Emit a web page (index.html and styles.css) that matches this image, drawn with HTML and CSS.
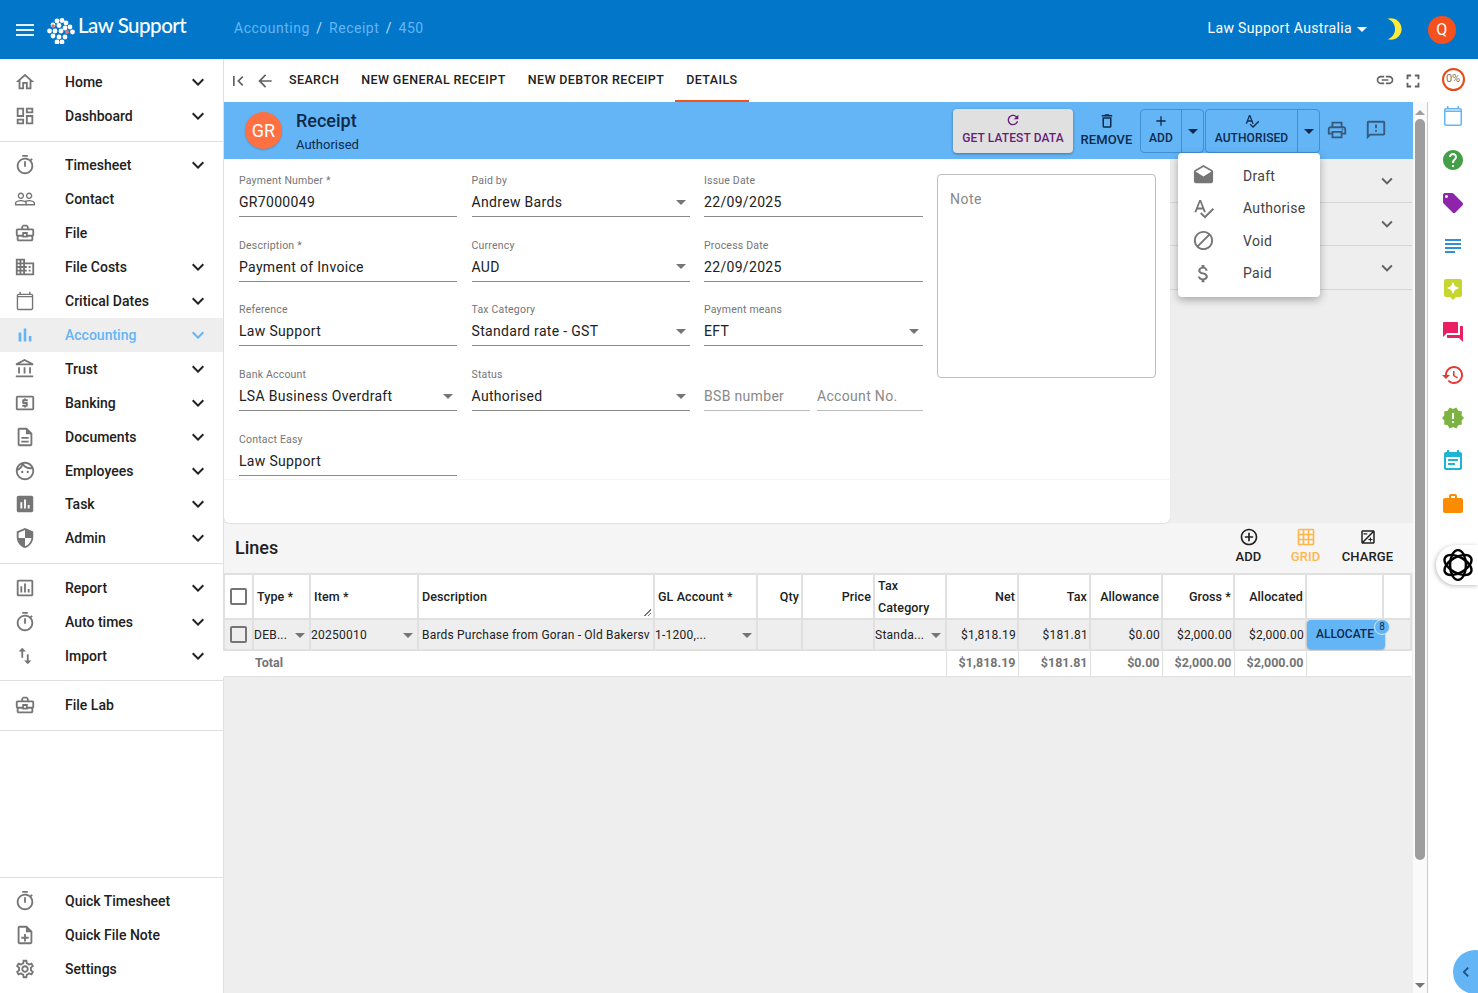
FILE: index.html
```html
<!DOCTYPE html>
<html lang="en">
<head>
<meta charset="utf-8">
<title>Receipt 450</title>
<link rel="stylesheet" href="styles.css">
</head>
<body>
<svg class="sprite" aria-hidden="true">
<defs>
<symbol id="i-menu" viewBox="0 0 24 24"><path d="M3 18h18v-2H3v2zm0-5h18v-2H3v2zm0-7v2h18V6H3z"/></symbol>
<symbol id="i-home" viewBox="0 0 24 24"><path d="M12 5.69l5 4.5V18h-2v-6H9v6H7v-7.81l5-4.5M12 3L2 12h3v8h6v-6h2v6h6v-8h3L12 3z"/></symbol>
<symbol id="i-dash" viewBox="0 0 24 24"><path d="M19 5v2h-4V5h4M9 5v6H5V5h4m10 8v6h-4v-6h4M9 17v2H5v-2h4M21 3h-8v6h8V3zM11 3H3v10h8V3zm10 8h-8v10h8V11zm-10 4H3v6h8v-6z"/></symbol>
<symbol id="i-timer" viewBox="0 0 24 24"><path d="M15 1H9v2h6V1zm-4 13h2V8h-2v6zm8.03-6.61l1.42-1.42c-.43-.51-.9-.99-1.41-1.41l-1.42 1.42C16.07 4.74 14.12 4 12 4c-4.97 0-9 4.03-9 9s4.02 9 9 9 9-4.03 9-9c0-2.12-.74-4.07-1.97-5.61zM12 20c-3.87 0-7-3.13-7-7s3.13-7 7-7 7 3.13 7 7-3.13 7-7 7z"/></symbol>
<symbol id="i-people" viewBox="0 0 24 24"><path d="M16.5 13c-1.2 0-3.07.34-4.5 1-1.43-.67-3.3-1-4.5-1C5.33 13 1 14.08 1 16.25V19h22v-2.75c0-2.17-4.33-3.25-6.5-3.25zm-4 4.5h-10v-1.25c0-.54 2.56-1.75 5-1.75s5 1.21 5 1.75v1.25zm9 0H14v-1.25c0-.46-.2-.86-.52-1.22.88-.3 1.96-.53 3.02-.53 2.44 0 5 1.21 5 1.75v1.25zM7.5 12c1.93 0 3.5-1.57 3.5-3.5S9.43 5 7.5 5 4 6.57 4 8.5 5.57 12 7.5 12zm0-5.5c1.1 0 2 .9 2 2s-.9 2-2 2-2-.9-2-2 .9-2 2-2zm9 5.5c1.93 0 3.5-1.57 3.5-3.5S18.43 5 16.5 5 13 6.57 13 8.5s1.57 3.5 3.5 3.5zm0-5.5c1.1 0 2 .9 2 2s-.9 2-2 2-2-.9-2-2 .9-2 2-2z"/></symbol>
<symbol id="i-case" viewBox="0 0 24 24"><path d="M20 7h-4V5l-2-2h-4L8 5v2H4c-1.1 0-2 .9-2 2v5c0 .75.4 1.38 1 1.73V19c0 1.11.89 2 2 2h14c1.11 0 2-.89 2-2v-3.28c.59-.35 1-.99 1-1.72V9c0-1.1-.9-2-2-2zM10 5h4v2h-4V5zM4 9h16v5h-5v-3H9v3H4V9zm9 6h-2v-2h2v2zm6 4H5v-3h4v1h6v-1h4v3z"/></symbol>
<symbol id="i-domain" viewBox="0 0 24 24"><path d="M12 7V3H2v18h20V7H12zM6 19H4v-2h2v2zm0-4H4v-2h2v2zm0-4H4V9h2v2zm0-4H4V5h2v2zm4 12H8v-2h2v2zm0-4H8v-2h2v2zm0-4H8V9h2v2zm0-4H8V5h2v2zm10 12h-8v-2h2v-2h-2v-2h2v-2h-2V9h8v10zm-2-8h-2v2h2v-2zm0 4h-2v2h2v-2z"/></symbol>
<symbol id="i-cal" viewBox="0 0 24 24"><path d="M19 4h-1V2h-1.5v2h-9V2H6v2H5c-1.1 0-2 .9-2 2v14c0 1.1.9 2 2 2h14c1.1 0 2-.9 2-2V6c0-1.1-.9-2-2-2zm.5 16c0 .3-.2.5-.5.5H5c-.3 0-.5-.2-.5-.5V8h15v12zM4.5 6.5V6c0-.3.2-.5.5-.5h14c.3 0 .5.2.5.5v.5h-15z"/></symbol>
<symbol id="i-bars" viewBox="0 0 24 24"><path d="M5 9.2h3V19H5zM10.6 5h2.8v14h-2.8zm5.6 8H19v6h-2.8z"/></symbol>
<symbol id="i-bank" viewBox="0 0 24 24"><path d="M6.5 10h-2v7h2v-7zm6 0h-2v7h2v-7zm8.5 9H2v2h19v-2zm-2.5-9h-2v7h2v-7zm-7-6.74L16.71 6H6.29l5.21-2.74m0-2.26L2 6v2h19V6l-9.5-5z"/></symbol>
<symbol id="i-atm" viewBox="0 0 24 24"><path d="M11 17h2v-1h1c.55 0 1-.45 1-1v-3c0-.55-.45-1-1-1h-3v-1h4V8h-2V7h-2v1h-1c-.55 0-1 .45-1 1v3c0 .55.45 1 1 1h3v1H9v2h2v1zm9-13H4c-1.11 0-1.99.89-1.99 2L2 18c0 1.11.89 2 2 2h16c1.11 0 2-.89 2-2V6c0-1.11-.89-2-2-2zm0 14H4V6h16v12z"/></symbol>
<symbol id="i-doc" viewBox="0 0 24 24"><path d="M8 16h8v2H8zm0-4h8v2H8zm6-10H6c-1.1 0-2 .9-2 2v16c0 1.1.89 2 1.99 2H18c1.1 0 2-.9 2-2V8l-6-6zm4 18H6V4h7v5h5v11z"/></symbol>
<symbol id="i-face" viewBox="0 0 24 24"><path d="M10.25 13c0 .69-.56 1.25-1.25 1.25S7.75 13.69 7.75 13s.56-1.25 1.25-1.25 1.25.56 1.25 1.25zM15 11.75c-.69 0-1.25.56-1.25 1.25s.56 1.25 1.25 1.25 1.25-.56 1.25-1.25-.56-1.25-1.25-1.25zm7 .25c0 5.52-4.48 10-10 10S2 17.52 2 12 6.48 2 12 2s10 4.48 10 10zM10.66 4.12C12.06 6.44 14.6 8 17.5 8c.46 0 .91-.05 1.34-.12C17.44 5.56 14.9 4 12 4c-.46 0-.91.05-1.34.12zM4.42 9.47c1.71-.97 3.03-2.55 3.66-4.44C6.37 6 5.05 7.58 4.42 9.47zM20 12c0-.78-.12-1.53-.33-2.24-.7.15-1.42.24-2.17.24-3.13 0-5.92-1.44-7.76-3.69C8.69 8.87 6.6 10.88 4 11.86c.01.04 0 .09 0 .14 0 4.41 3.59 8 8 8s8-3.59 8-8z"/></symbol>
<symbol id="i-assess" viewBox="0 0 24 24"><path d="M19 3H5c-1.1 0-2 .9-2 2v14c0 1.1.9 2 2 2h14c1.1 0 2-.9 2-2V5c0-1.1-.9-2-2-2zM9 17H7v-7h2v7zm4 0h-2V7h2v10zm4 0h-2v-4h2v4z"/></symbol>
<symbol id="i-shield" viewBox="0 0 24 24"><path d="M12 1L3 5v6c0 5.55 3.84 10.74 9 12 5.16-1.26 9-6.45 9-12V5l-9-4zm0 10.99h7c-.53 4.12-3.28 7.79-7 8.94V12H5V6.3l7-3.11v8.8z"/></symbol>
<symbol id="i-report" viewBox="0 0 24 24"><path d="M19 3H5c-1.1 0-2 .9-2 2v14c0 1.1.9 2 2 2h14c1.1 0 2-.9 2-2V5c0-1.1-.9-2-2-2zm0 16H5V5h14v14zM7 10h2v7H7zm4-3h2v10h-2zm4 6h2v4h-2z"/></symbol>
<symbol id="i-import" viewBox="0 0 24 24"><path d="M9 3L5 6.99h3V14h2V6.99h3L9 3zm7 14.01V10h-2v7.01h-3L15 21l4-3.99h-3z"/></symbol>
<symbol id="i-note" viewBox="0 0 24 24"><path d="M13 11h-2v3H8v2h3v3h2v-3h3v-2h-3zm1-9H6c-1.1 0-2 .9-2 2v16c0 1.1.89 2 1.99 2H18c1.1 0 2-.9 2-2V8l-6-6zm4 18H6V4h7v5h5v11z"/></symbol>
<symbol id="i-gear" viewBox="0 0 24 24"><path d="M19.43 12.98c.04-.32.07-.64.07-.98 0-.34-.03-.66-.07-.98l2.11-1.65c.19-.15.24-.42.12-.64l-2-3.46c-.12-.22-.39-.3-.61-.22l-2.49 1c-.52-.4-1.08-.73-1.69-.98l-.38-2.65C14.46 2.18 14.25 2 14 2h-4c-.25 0-.46.18-.49.42l-.38 2.65c-.61.25-1.17.59-1.69.98l-2.49-1c-.23-.09-.49 0-.61.22l-2 3.46c-.13.22-.07.49.12.64l2.11 1.65c-.04.32-.07.65-.07.98 0 .33.03.66.07.98l-2.11 1.65c-.19.15-.24.42-.12.64l2 3.46c.12.22.39.3.61.22l2.49-1c.52.4 1.08.73 1.69.98l.38 2.65c.03.24.24.42.49.42h4c.25 0 .46-.18.49-.42l.38-2.65c.61-.25 1.17-.59 1.69-.98l2.49 1c.23.09.49 0 .61-.22l2-3.46c.12-.22.07-.49-.12-.64l-2.11-1.65zM17.45 11.27c.04.31.05.52.05.73 0 .21-.02.43-.05.73l-.14 1.13.89.7 1.08.84-.7 1.21-1.27-.51-1.04-.42-.9.68c-.43.32-.84.56-1.25.73l-1.06.43-.16 1.13-.2 1.35h-1.4l-.19-1.35-.16-1.13-1.06-.43c-.43-.18-.83-.41-1.23-.71l-.91-.7-1.06.43-1.27.51-.7-1.21 1.08-.84.89-.7-.14-1.13c-.03-.31-.05-.54-.05-.74s.02-.43.05-.73l.14-1.13-.89-.7-1.08-.84.7-1.21 1.27.51 1.04.42.9-.68c.43-.32.84-.56 1.25-.73l1.06-.43.16-1.13.2-1.35h1.39l.19 1.35.16 1.13 1.06.43c.43.18.83.41 1.23.71l.91.7 1.06-.43 1.27-.51.7 1.21-1.07.85-.89.7.14 1.13zM12 8c-2.21 0-4 1.79-4 4s1.79 4 4 4 4-1.79 4-4-1.79-4-4-4zm0 6c-1.1 0-2-.9-2-2s.9-2 2-2 2 .9 2 2-.9 2-2 2z"/></symbol>
<symbol id="i-more" viewBox="0 0 24 24"><path d="M16.59 8.59L12 13.17 7.41 8.59 6 10l6 6 6-6z"/></symbol>
<symbol id="i-first" viewBox="0 0 24 24"><path d="M18.41 16.59L13.82 12l4.59-4.59L17 6l-6 6 6 6zM6 6h2v12H6z"/></symbol>
<symbol id="i-back" viewBox="0 0 24 24"><path d="M20 11H7.83l5.59-5.59L12 4l-8 8 8 8 1.41-1.41L7.83 13H20v-2z"/></symbol>
<symbol id="i-link" viewBox="0 0 24 24"><path d="M3.9 12c0-1.71 1.39-3.1 3.1-3.1h4V7H7c-2.76 0-5 2.24-5 5s2.24 5 5 5h4v-1.9H7c-1.71 0-3.1-1.39-3.1-3.1zM8 13h8v-2H8v2zm9-6h-4v1.9h4c1.71 0 3.1 1.39 3.1 3.1s-1.39 3.1-3.1 3.1h-4V17h4c2.76 0 5-2.24 5-5s-2.24-5-5-5z"/></symbol>
<symbol id="i-full" viewBox="0 0 24 24"><path d="M7 14H5v5h5v-2H7v-3zm-2-4h2V7h3V5H5v5zm12 7h-3v2h5v-5h-2v3zM14 5v2h3v3h2V5h-5z"/></symbol>
<symbol id="i-refresh" viewBox="0 0 24 24"><path d="M17.65 6.35C16.2 4.9 14.21 4 12 4c-4.42 0-7.99 3.58-7.99 8s3.57 8 7.99 8c3.73 0 6.84-2.55 7.73-6h-2.08c-.82 2.33-3.04 4-5.65 4-3.31 0-6-2.69-6-6s2.69-6 6-6c1.66 0 3.14.69 4.22 1.78L13 11h7V4l-2.35 2.35z"/></symbol>
<symbol id="i-trash" viewBox="0 0 24 24"><path d="M6 19c0 1.1.9 2 2 2h8c1.1 0 2-.9 2-2V7H6v12zM8 9h8v10H8V9zm7.5-5l-1-1h-5l-1 1H5v2h14V4z"/></symbol>
<symbol id="i-add" viewBox="0 0 24 24"><path d="M19 13h-6v6h-2v-6H5v-2h6V5h2v6h6v2z"/></symbol>
<symbol id="i-spell" viewBox="0 0 24 24"><path d="M12.45 16h2.09L9.43 3H7.57L2.46 16h2.09l1.12-3h5.64l1.14 3zm-6.02-5L8.5 5.48 10.57 11H6.43zm15.16.59l-8.09 8.09L9.83 16l-1.41 1.41 5.09 5.09L23 13l-1.41-1.41z"/></symbol>
<symbol id="i-print" viewBox="0 0 24 24"><path d="M19 8h-1V3H6v5H5c-1.66 0-3 1.34-3 3v6h4v4h12v-4h4v-6c0-1.66-1.34-3-3-3zM8 5h8v3H8V5zm8 12v2H8v-4h8v2zm2-2v-2H6v2H4v-4c0-.55.45-1 1-1h14c.55 0 1 .45 1 1v4h-2z"/><circle cx="18" cy="11.5" r="1"/></symbol>
<symbol id="i-sms" viewBox="0 0 24 24"><path d="M20 2H4c-1.1 0-1.99.9-1.99 2L2 22l4-4h14c1.1 0 2-.9 2-2V4c0-1.1-.9-2-2-2zm0 14H5.17L4 17.17V4h16v12zm-9-4h2v2h-2zm0-6h2v4h-2z"/></symbol>
<symbol id="i-draft" viewBox="0 0 24 24"><path d="M21.99 8c0-.72-.37-1.35-.94-1.7L12 1 2.95 6.3C2.38 6.65 2 7.28 2 8v10c0 1.1.9 2 2 2h16c1.1 0 2-.9 2-2l-.01-10zM12 13L3.74 7.84 12 3l8.26 4.84L12 13z"/></symbol>
<symbol id="i-block" viewBox="0 0 24 24"><path d="M12 2C6.48 2 2 6.48 2 12s4.48 10 10 10 10-4.48 10-10S17.52 2 12 2zM4 12c0-4.42 3.58-8 8-8 1.85 0 3.55.63 4.9 1.69L5.69 16.9C4.63 15.55 4 13.85 4 12zm8 8c-1.85 0-3.55-.63-4.9-1.69L18.31 7.1C19.37 8.45 20 10.15 20 12c0 4.42-3.58 8-8 8z"/></symbol>
<symbol id="i-money" viewBox="0 0 24 24"><path d="M11.8 10.9c-2.27-.59-3-1.2-3-2.15 0-1.09 1.01-1.85 2.7-1.85 1.78 0 2.44.85 2.5 2.1h2.21c-.07-1.72-1.12-3.3-3.21-3.81V3h-3v2.16c-1.94.42-3.5 1.68-3.5 3.61 0 2.31 1.91 3.46 4.7 4.13 2.5.6 3 1.48 3 2.41 0 .69-.49 1.79-2.7 1.79-2.06 0-2.87-.92-2.98-2.1h-2.2c.12 2.19 1.76 3.42 3.68 3.83V21h3v-2.15c1.95-.37 3.5-1.5 3.5-3.55 0-2.84-2.43-3.81-4.7-4.4z"/></symbol>
<symbol id="i-help" viewBox="0 0 24 24"><path d="M12 2C6.48 2 2 6.48 2 12s4.48 10 10 10 10-4.48 10-10S17.52 2 12 2zm1 17h-2v-2h2v2zm2.07-7.75l-.9.92C13.45 12.9 13 13.5 13 15h-2v-.5c0-1.1.45-2.1 1.17-2.83l1.24-1.26c.37-.36.59-.86.59-1.41 0-1.1-.9-2-2-2s-2 .9-2 2H8c0-2.21 1.79-4 4-4s4 1.79 4 4c0 .88-.36 1.68-.93 2.25z"/></symbol>
<symbol id="i-tag" viewBox="0 0 24 24"><path d="M21.41 11.58l-9-9C12.05 2.22 11.55 2 11 2H4c-1.1 0-2 .9-2 2v7c0 .55.22 1.05.59 1.42l9 9c.36.36.86.58 1.41.58.55 0 1.05-.22 1.41-.59l7-7c.37-.36.59-.86.59-1.41 0-.55-.23-1.06-.59-1.42zM5.5 7C4.67 7 4 6.33 4 5.5S4.67 4 5.5 4 7 4.67 7 5.5 6.33 7 5.5 7z"/></symbol>
<symbol id="i-notes" viewBox="0 0 24 24"><path d="M14 17H4v2h10v-2zm6-8H4v2h16V9zM4 15h16v-2H4v2zM4 5v2h16V5H4z"/></symbol>
<symbol id="i-assist" viewBox="0 0 24 24"><path d="M19 2H5c-1.1 0-2 .9-2 2v14c0 1.1.9 2 2 2h4l3 3 3-3h4c1.1 0 2-.9 2-2V4c0-1.1-.9-2-2-2zm-5.12 10.88L12 17l-1.88-4.12L6 11l4.12-1.88L12 5l1.88 4.12L18 11l-4.12 1.88z"/></symbol>
<symbol id="i-forum" viewBox="0 0 24 24"><path d="M21 6h-2v9H6v2c0 .55.45 1 1 1h11l4 4V7c0-.55-.45-1-1-1zm-4 6V3c0-.55-.45-1-1-1H3c-.55 0-1 .45-1 1v14l4-4h10c.55 0 1-.45 1-1z"/></symbol>
<symbol id="i-history" viewBox="0 0 24 24"><path d="M13 3c-4.97 0-9 4.03-9 9H1l3.89 3.89.07.14L9 12H6c0-3.87 3.13-7 7-7s7 3.13 7 7-3.13 7-7 7c-1.93 0-3.68-.79-4.94-2.06l-1.42 1.42C8.27 19.99 10.51 21 13 21c4.97 0 9-4.03 9-9s-4.03-9-9-9zm-1 5v5l4.28 2.54.72-1.21-3.5-2.08V8H12z"/></symbol>
<symbol id="i-release" viewBox="0 0 24 24"><path d="M23 12l-2.44-2.78.34-3.68-3.61-.82-1.89-3.18L12 3 8.6 1.54 6.71 4.72l-3.61.81.34 3.68L1 12l2.44 2.78-.34 3.69 3.61.82 1.89 3.18L12 21l3.4 1.46 1.89-3.18 3.61-.82-.34-3.68L23 12zm-10 5h-2v-2h2v2zm0-4h-2V7h2v6z"/></symbol>
<symbol id="i-event" viewBox="0 0 24 24"><path d="M17 10H7v2h10v-2zm2-7h-1V1h-2v2H8V1H6v2H5c-1.11 0-1.99.9-1.99 2L3 19c0 1.1.89 2 2 2h14c1.1 0 2-.9 2-2V5c0-1.1-.9-2-2-2zm0 16H5V8h14v11zm-5-5H7v2h7v-2z"/></symbol>
<symbol id="i-work" viewBox="0 0 24 24"><path d="M20 6h-4V4c0-1.11-.89-2-2-2h-4c-1.11 0-2 .89-2 2v2H4c-1.11 0-1.99.89-1.99 2L2 19c0 1.11.89 2 2 2h16c1.11 0 2-.89 2-2V8c0-1.11-.89-2-2-2zm-6 0h-4V4h4v2z"/></symbol>
<symbol id="i-addc" viewBox="0 0 24 24"><path d="M13 7h-2v4H7v2h4v4h2v-4h4v-2h-4V7zm-1-5C6.48 2 2 6.48 2 12s4.48 10 10 10 10-4.48 10-10S17.52 2 12 2zm0 18c-4.41 0-8-3.59-8-8s3.59-8 8-8 8 3.59 8 8-3.59 8-8 8z"/></symbol>
<symbol id="i-grid" viewBox="0 0 24 24"><path d="M20 2H4c-1.1 0-2 .9-2 2v16c0 1.1.9 2 2 2h16c1.1 0 2-.9 2-2V4c0-1.1-.9-2-2-2zM8 20H4v-4h4v4zm0-6H4v-4h4v4zm0-6H4V4h4v4zm6 12h-4v-4h4v4zm0-6h-4v-4h4v4zm0-6h-4V4h4v4zm6 12h-4v-4h4v4zm0-6h-4v-4h4v4zm0-6h-4V4h4v4z"/></symbol>
<symbol id="i-expo" viewBox="0 0 24 24"><path fill-rule="evenodd" d="M19 3H5c-1.1 0-2 .9-2 2v14c0 1.1.9 2 2 2h14c1.1 0 2-.9 2-2V5c0-1.1-.9-2-2-2zM5 5h12.59L5 17.59V5zm14 14H6.41L19 6.41V19zM14.5 18H16v-2h2v-1.5h-2v-2h-1.5v2h-2V16h2v2zM6 7h5v1.5H6V7z"/></symbol>
<symbol id="i-moon" viewBox="0 0 24 24"><path d="M9 2c-1.05 0-2.05.16-3 .46 4.06 1.27 7 5.06 7 9.54 0 4.48-2.94 8.27-7 9.54.95.3 1.95.46 3 .46 5.52 0 10-4.48 10-10S14.52 2 9 2z"/></symbol>
<symbol id="i-left" viewBox="0 0 24 24"><path d="M15.41 7.41L14 6l-6 6 6 6 1.41-1.41L10.83 12z"/></symbol>
</defs>
</svg>

<div class="app">
  <header class="topbar">
    <svg class="ic menu-ic"><use href="#i-menu"/></svg>
    <div class="logo">
      <svg class="logo-mark" viewBox="0 0 28 26">
        <g fill="#fff"><circle cx="10" cy="3" r="2.4"/><circle cx="15" cy="2.5" r="2.4"/><circle cx="19" cy="5" r="2.4"/><circle cx="6" cy="7" r="2.4"/><circle cx="12" cy="7.5" r="2.4"/><circle cx="18" cy="10" r="2.4"/><circle cx="23" cy="9" r="2.4"/><circle cx="2.5" cy="13" r="2.4"/><circle cx="8" cy="13" r="2.4"/><circle cx="14" cy="13" r="2.4"/><circle cx="25.5" cy="14" r="2.4"/><circle cx="6" cy="18" r="2.4"/><circle cx="12" cy="19" r="2.4"/><circle cx="18" cy="19" r="2.4"/><circle cx="10" cy="24" r="2.4"/><circle cx="15" cy="24" r="2.4"/></g>
        <g fill="#e57373"><circle cx="6" cy="8" r="1.8"/><circle cx="20" cy="14" r="2"/></g>
      </svg>
      <span class="logo-text">Law Support</span>
    </div>
    <nav class="crumbs"><span>Accounting</span><i>/</i><span>Receipt</span><i>/</i><span>450</span></nav>
    <div class="top-right">
      <span class="org">Law Support Australia</span><b class="caret caret-w"></b>
      <svg class="ic moon"><use href="#i-moon"/></svg>
      <span class="avatar-q">Q</span>
    </div>
  </header>

  <aside class="sidebar">
    <div class="nav-top">
      <ul class="nav">
        <li class="nav-row"><svg class="ic"><use href="#i-home"/></svg><span>Home</span><svg class="ic chev"><use href="#i-more"/></svg></li>
        <li class="nav-row"><svg class="ic"><use href="#i-dash"/></svg><span>Dashboard</span><svg class="ic chev"><use href="#i-more"/></svg></li>
      </ul>
      <ul class="nav">
        <li class="nav-row"><svg class="ic"><use href="#i-timer"/></svg><span>Timesheet</span><svg class="ic chev"><use href="#i-more"/></svg></li>
        <li class="nav-row"><svg class="ic"><use href="#i-people"/></svg><span>Contact</span></li>
        <li class="nav-row"><svg class="ic"><use href="#i-case"/></svg><span>File</span></li>
        <li class="nav-row"><svg class="ic"><use href="#i-domain"/></svg><span>File Costs</span><svg class="ic chev"><use href="#i-more"/></svg></li>
        <li class="nav-row"><svg class="ic"><use href="#i-cal"/></svg><span>Critical Dates</span><svg class="ic chev"><use href="#i-more"/></svg></li>
        <li class="nav-row active"><svg class="ic"><use href="#i-bars"/></svg><span>Accounting</span><svg class="ic chev"><use href="#i-more"/></svg></li>
        <li class="nav-row"><svg class="ic"><use href="#i-bank"/></svg><span>Trust</span><svg class="ic chev"><use href="#i-more"/></svg></li>
        <li class="nav-row"><svg class="ic"><use href="#i-atm"/></svg><span>Banking</span><svg class="ic chev"><use href="#i-more"/></svg></li>
        <li class="nav-row"><svg class="ic"><use href="#i-doc"/></svg><span>Documents</span><svg class="ic chev"><use href="#i-more"/></svg></li>
        <li class="nav-row nav-row-short"><svg class="ic"><use href="#i-face"/></svg><span>Employees</span><svg class="ic chev"><use href="#i-more"/></svg></li>
        <li class="nav-row"><svg class="ic"><use href="#i-assess"/></svg><span>Task</span><svg class="ic chev"><use href="#i-more"/></svg></li>
        <li class="nav-row"><svg class="ic"><use href="#i-shield"/></svg><span>Admin</span><svg class="ic chev"><use href="#i-more"/></svg></li>
      </ul>
      <ul class="nav">
        <li class="nav-row"><svg class="ic"><use href="#i-report"/></svg><span>Report</span><svg class="ic chev"><use href="#i-more"/></svg></li>
        <li class="nav-row"><svg class="ic"><use href="#i-timer"/></svg><span>Auto times</span><svg class="ic chev"><use href="#i-more"/></svg></li>
        <li class="nav-row"><svg class="ic"><use href="#i-import"/></svg><span>Import</span><svg class="ic chev"><use href="#i-more"/></svg></li>
      </ul>
      <ul class="nav">
        <li class="nav-row"><svg class="ic"><use href="#i-case"/></svg><span>File Lab</span></li>
      </ul>
    </div>
    <ul class="nav nav-bottom">
      <li class="nav-row"><svg class="ic"><use href="#i-timer"/></svg><span>Quick Timesheet</span></li>
      <li class="nav-row"><svg class="ic"><use href="#i-note"/></svg><span>Quick File Note</span></li>
      <li class="nav-row"><svg class="ic"><use href="#i-gear"/></svg><span>Settings</span></li>
    </ul>
  </aside>

  <main class="main">
    <div class="tabs">
      <svg class="ic tab-ic first-ic"><use href="#i-first"/></svg>
      <svg class="ic tab-ic"><use href="#i-back"/></svg>
      <a class="tab">SEARCH</a>
      <a class="tab">NEW GENERAL RECEIPT</a>
      <a class="tab">NEW DEBTOR RECEIPT</a>
      <a class="tab tab-on">DETAILS</a>
      <span class="tabs-end">
        <svg class="ic tab-ic"><use href="#i-link"/></svg>
        <svg class="ic tab-ic full-ic"><use href="#i-full"/></svg>
      </span>
    </div>
    <div class="stage">
      <div class="content">
        <section class="appbar">
          <span class="avatar-gr">GR</span>
          <div class="appbar-title"><h1>Receipt</h1><p>Authorised</p></div>
          <div class="actions">
            <button class="act act-latest"><svg class="ic"><use href="#i-refresh"/></svg>GET LATEST DATA</button>
            <button class="act act-remove"><svg class="ic"><use href="#i-trash"/></svg>REMOVE</button>
            <div class="split">
              <button class="act act-add"><svg class="ic"><use href="#i-add"/></svg>ADD</button>
              <button class="drop"><b class="caret"></b></button>
            </div>
            <div class="split">
              <button class="act act-auth"><svg class="ic"><use href="#i-spell"/></svg>AUTHORISED</button>
              <button class="drop"><b class="caret"></b></button>
            </div>
            <svg class="ic bar-ic"><use href="#i-print"/></svg>
            <svg class="ic bar-ic"><use href="#i-sms"/></svg>
          </div>
        </section>

        <section class="detail">
          <form class="card">
            <div class="fields">
              <div class="field"><label>Payment Number *</label><div class="val">GR7000049</div></div>
              <div class="field"><label>Paid by</label><div class="val sel">Andrew Bards<b class="caret"></b></div></div>
              <div class="field"><label>Issue Date</label><div class="val">22/09/2025</div></div>
              <div class="field"><label>Description *</label><div class="val">Payment of Invoice</div></div>
              <div class="field"><label>Currency</label><div class="val sel">AUD<b class="caret"></b></div></div>
              <div class="field"><label>Process Date</label><div class="val">22/09/2025</div></div>
              <div class="field"><label>Reference</label><div class="val">Law Support</div></div>
              <div class="field"><label>Tax Category</label><div class="val sel">Standard rate - GST<b class="caret"></b></div></div>
              <div class="field"><label>Payment means</label><div class="val sel">EFT<b class="caret"></b></div></div>
              <div class="field"><label>Bank Account</label><div class="val sel">LSA Business Overdraft<b class="caret"></b></div></div>
              <div class="field"><label>Status</label><div class="val sel">Authorised<b class="caret"></b></div></div>
              <div class="field field-pair">
                <div class="sub"><label>&nbsp;</label><div class="val ph">BSB number</div></div>
                <div class="sub"><label>&nbsp;</label><div class="val ph">Account No.</div></div>
              </div>
              <div class="field"><label>Contact Easy</label><div class="val">Law Support</div></div>
            </div>
            <div class="notebox">Note</div>
          </form>
          <div class="panels">
            <div class="panel"><svg class="ic"><use href="#i-more"/></svg></div>
            <div class="panel"><svg class="ic"><use href="#i-more"/></svg></div>
            <div class="panel"><svg class="ic"><use href="#i-more"/></svg></div>
          </div>
        </section>

        <section class="lines">
          <div class="lines-head">
            <h2>Lines</h2>
            <div class="lines-acts">
              <button class="lact lact-add"><svg class="ic"><use href="#i-addc"/></svg>ADD</button>
              <button class="lact lact-grid"><svg class="ic"><use href="#i-grid"/></svg>GRID</button>
              <button class="lact lact-charge"><svg class="ic"><use href="#i-expo"/></svg>CHARGE</button>
            </div>
          </div>
          <table class="grid">
            <colgroup>
              <col class="c29"><col class="c57"><col class="c108"><col class="c236"><col class="c103"><col class="c45">
              <col class="c72"><col class="c72"><col class="c72"><col class="c72"><col class="c72"><col class="c72"><col class="c72"><col class="c77"><col class="c28">
            </colgroup>
            <thead>
              <tr>
                <th class="ctr"><span class="check"></span></th>
                <th>Type *</th><th>Item *</th><th class="desc-h">Description<span class="grip"></span></th><th>GL Account *</th>
                <th class="num">Qty</th><th class="num">Price</th><th>Tax Category</th>
                <th class="num">Net</th><th class="num">Tax</th><th class="num">Allowance</th><th class="num">Gross *</th><th class="num">Allocated</th><th></th><th></th>
              </tr>
            </thead>
            <tbody>
              <tr>
                <td class="ctr"><span class="check"></span></td>
                <td class="tsel">DEB...<b class="caret"></b></td>
                <td class="tsel">20250010<b class="caret"></b></td>
                <td class="desc">Bards Purchase from Goran - Old Bakersv</td>
                <td class="tsel">1-1200,...<b class="caret"></b></td>
                <td></td><td></td>
                <td class="tsel">Standa...<b class="caret"></b></td>
                <td class="num">$1,818.19</td><td class="num">$181.81</td><td class="num">$0.00</td><td class="num">$2,000.00</td><td class="num">$2,000.00</td>
                <td class="alloc"><button class="allocate">ALLOCATE<span class="badge">8</span></button></td>
                <td></td>
              </tr>
            </tbody>
            <tfoot>
              <tr>
                <td class="foot-blank"></td><td class="foot-blank tot-label" colspan="7">Total</td>
                <td class="num">$1,818.19</td><td class="num">$181.81</td><td class="num">$0.00</td><td class="num">$2,000.00</td><td class="num">$2,000.00</td><td class="foot-blank"></td><td class="foot-blank"></td>
              </tr>
            </tfoot>
          </table>
        </section>

        <div class="menu">
          <div class="menu-item"><svg class="ic"><use href="#i-draft"/></svg>Draft</div>
          <div class="menu-item"><svg class="ic"><use href="#i-spell"/></svg>Authorise</div>
          <div class="menu-item"><svg class="ic"><use href="#i-block"/></svg>Void</div>
          <div class="menu-item"><svg class="ic"><use href="#i-money"/></svg>Paid</div>
        </div>
      </div>
      <div class="vscroll"><b class="arr-up"></b><span class="thumb"></span><b class="arr-down"></b></div>
    </div>
  </main>

  <aside class="rail">
    <span class="pct">0%</span>
    <svg class="ic c-blue"><use href="#i-cal"/></svg>
    <svg class="ic c-green"><use href="#i-help"/></svg>
    <svg class="ic c-purple"><use href="#i-tag"/></svg>
    <svg class="ic c-lines"><use href="#i-notes"/></svg>
    <svg class="ic c-lime"><use href="#i-assist"/></svg>
    <svg class="ic c-pink"><use href="#i-forum"/></svg>
    <svg class="ic c-red"><use href="#i-history"/></svg>
    <svg class="ic c-lgreen"><use href="#i-release"/></svg>
    <svg class="ic c-cyan"><use href="#i-event"/></svg>
    <svg class="ic c-orange"><use href="#i-work"/></svg>
    <div class="knot">
      <svg viewBox="0 0 32 32"><g fill="none" stroke="#000" stroke-width="2.3"><ellipse cx="16" cy="16" rx="7.5" ry="14"/><ellipse cx="16" cy="16" rx="7.5" ry="14" transform="rotate(60 16 16)"/><ellipse cx="16" cy="16" rx="7.5" ry="14" transform="rotate(120 16 16)"/></g></svg>
    </div>
    <div class="rail-toggle"><svg class="ic"><use href="#i-left"/></svg></div>
  </aside>
</div>
</body>
</html>
```
FILE: styles.css
```css
* { box-sizing: border-box; }
html, body { margin: 0; height: 100%; overflow: hidden; }
body { font-family: Roboto, "Liberation Sans", sans-serif; color: #212121; background: #fff; }
ul { list-style: none; margin: 0; padding: 0; }
h1, h2, p { margin: 0; }
button { font: inherit; border: 0; background: none; padding: 0; color: inherit; }
.sprite { position: absolute; width: 0; height: 0; }
.ic { width: 24px; height: 24px; fill: currentColor; display: block; flex: none; }

.app { display: grid; grid-template-columns: 224px 1fr 50px; grid-template-rows: 59px 934px; height: 993px; width: 1478px; }

/* top bar */
.topbar { grid-column: 1 / 4; background: #0277c9; display: flex; align-items: center; color: #fff; padding: 0 22px 0 13px; }
.menu-ic { color: #e3f2fd; }
.logo { display: flex; align-items: center; margin: -5px 0 0 10px; width: 187px; }
.logo-mark { width: 28px; height: 26px; margin-top: 7px; }
.logo-text { font-family: Lato, sans-serif; font-size: 20.5px; font-weight: 500; letter-spacing: -.5px; margin-left: 3px; padding-bottom: 4px; }
.crumbs { display: flex; color: #64b5f6; font-size: 14px; letter-spacing: .5px; gap: 6.5px; padding-bottom: 3px; }
.crumbs i { font-style: normal; color: #bbdefb; }
.top-right { margin-left: auto; display: flex; align-items: center; font-size: 14px; letter-spacing: .35px; }
.org { padding-bottom: 3px; }
.caret { display: inline-block; width: 0; height: 0; border: 5px solid transparent; border-top-color: #757575; border-bottom: 0; flex: none; }
.caret-w { border-top-color: #fff; margin-left: 5px; }
.moon { color: #ffeb3b; width: 26px; height: 26px; margin-left: 14px; margin-top: -1px; }
.avatar-q { width: 28px; height: 28px; border-radius: 50%; background: #f4511e; margin-left: 21px; display: flex; align-items: center; justify-content: center; font-size: 16px; }

/* sidebar */
.sidebar { border-right: 1px solid #e0e0e0; display: flex; flex-direction: column; justify-content: space-between; padding-top: 6px; }
.nav { padding-bottom: 8px; border-bottom: 1px solid #e0e0e0; margin-bottom: 7px; }
.nav-top .nav:nth-child(1) { margin-bottom: 6px; }
.nav-top .nav:nth-child(3) { padding-bottom: 7px; }
.nav-row { height: 34px; display: flex; align-items: center; padding-left: 14px; font-size: 14px; font-weight: 500; color: #212121; position: relative; }
.nav-row-short { height: 33px; }
.nav-row > .ic { color: #757575; width: 22px; height: 22px; }
.nav-row span { margin-left: 29px; }
.nav-row > .chev { margin-left: auto; margin-right: 13px; width: 24px; height: 24px; color: #212121; }
.nav-row.active { background: #eee; color: #64b5f6; }
.nav-row.active > .ic { color: #64b5f6; }
.nav-bottom { border-bottom: 0; border-top: 1px solid #e0e0e0; margin: 0; padding: 6px 0 7px; }

/* tabs */
.main { min-width: 0; display: flex; flex-direction: column; }
.tabs { height: 43px; display: flex; align-items: center; padding-left: 4px; flex: none; }
.tab-ic { color: #616161; width: 20px; height: 20px; }
.first-ic { margin-right: 7px; }
.tab { font-size: 12.5px; font-weight: 500; padding: 0 11px; height: 43px; line-height: 42px; letter-spacing: .4px; color: #212121; }
.tabs > .tab:first-of-type { margin-left: 3px; }
.tab-on { border-bottom: 2px solid #f4511e; }
.tabs-end { margin-left: auto; display: flex; margin-right: 4px; gap: 7px; }
.full-ic { width: 22px; height: 22px; }

.stage { flex: 1; display: flex; min-height: 0; border-right: 1px solid #ccc; }
.content { flex: 1; position: relative; background: #eee; min-width: 0; display: flex; flex-direction: column; }
.vscroll { width: 14px; background: #fafafa; flex: none; display: flex; flex-direction: column; align-items: center; padding: 8px 0 5px; }
.thumb { width: 10px; height: 741px; background: #9e9e9e; border-radius: 5px; margin-top: 4px; }
.arr-up { width: 0; height: 0; border: 5px solid transparent; border-bottom: 5px solid #9e9e9e; border-top: 0; }
.arr-down { width: 0; height: 0; border: 5px solid transparent; border-top: 5px solid #757575; border-bottom: 0; margin-top: auto; }

/* app bar */
.appbar { height: 57px; background: #64b5f6; display: flex; align-items: center; padding-left: 21px; flex: none; color: #0d2a4a; }
.avatar-gr { width: 37px; height: 37px; border-radius: 50%; background: #ff7043; color: #fff; font-size: 18px; display: flex; align-items: center; justify-content: center; box-shadow: 0 1px 2px rgba(0,0,0,.2); }
.appbar-title { margin-left: 14px; }
.appbar-title h1 { font-size: 18px; font-weight: 500; line-height: 24px; margin-top: 3px; }
.appbar-title p { font-size: 13px; line-height: 22px; margin-top: 1px; }
.actions { margin-left: auto; display: flex; align-items: flex-start; height: 57px; padding-top: 7px; }
.act { display: flex; flex-direction: column; align-items: center; font-size: 12px; font-weight: 500; letter-spacing: .1px; height: 44px; }
.act .ic { width: 16px; height: 16px; margin: 3px 0 2px; }
.act-latest { width: 120px; background: #e0e0e0; color: #6a1b7a; border-radius: 4px; box-shadow: 0 1px 3px rgba(0,0,0,.35); }
.act-latest .ic { margin-bottom: 3px; }
.act-remove { width: 67px; font-size: 13px; }
.act-remove .ic { width: 18px; height: 18px; margin: 3px 0 2px; }
.act-add { width: 40px; }
.act-auth { width: 91px; }
.split { display: flex; border: 1px solid #3f8fd6; border-radius: 4px; height: 44px; margin-right: 1px; }
.split .act { height: 42px; }
.drop { width: 22px; border-left: 1px solid #3f8fd6; display: flex; align-items: center; justify-content: center; }
.drop .caret { border-top-color: #0d2a4a; }
.bar-ic { width: 22px; height: 22px; color: #37597a; margin: 10px 0 0 5px; }
.bar-ic + .bar-ic { margin-left: 17px; margin-right: 26px; }

/* form */
.detail { display: flex; height: 364px; flex: none; }
.card { width: 946px; background: #fff; border-radius: 0 0 6px 6px; display: flex; align-items: flex-start; padding: 15px 14px 0 15px; position: relative; box-shadow: 0 1px 1px rgba(0,0,0,.08); }
.card::after { content: ""; position: absolute; left: 0; right: 0; top: 320px; border-top: 1px solid #f5f5f5; }
.fields { display: grid; grid-template-columns: 218px 218px 219px; column-gap: 14.5px; grid-auto-rows: 64.7px; width: 684px; flex: none; }
.field { display: flex; flex-direction: column; min-width: 0; }
label { display: block; font-size: 10.5px; line-height: 13px; color: #757575; letter-spacing: .2px; height: 13px; }
.val { margin-top: 1px; height: 29px; line-height: 28px; border-bottom: 1px solid #8a8a8a; font-size: 14px; letter-spacing: .32px; color: #212121; display: flex; align-items: center; justify-content: space-between; }
.sel { padding-right: 4px; }
.field-pair { flex-direction: row; gap: 7px; }
.sub { flex: 1; min-width: 0; }
.ph { color: #888; border-bottom-color: #bbb; }
.notebox { width: 219px; height: 204px; margin-left: 14px; border: 1px solid #bdbdbd; border-radius: 4px; padding: 16px 12px; font-size: 14px; letter-spacing: .5px; color: #888; flex: none; }
.panels { flex: 1; padding-right: 1px; }
.panel { height: 43.5px; border-bottom: 1px solid #d6d6d6; display: flex; align-items: center; justify-content: flex-end; padding: 1px 14px 0 0; color: #616161; }
.panel .ic { width: 22px; height: 22px; }

/* lines */
.lines { flex: 1; min-height: 0; }
.lines-head { height: 50px; background: #f5f5f5; display: flex; align-items: center; padding-left: 11px; }
.lines-head h2 { font-size: 18px; font-weight: 500; padding-bottom: 2px; }
.lines-acts { margin-left: auto; display: flex; padding-bottom: 4px; }
.lact { display: flex; flex-direction: column; align-items: center; font-size: 13px; font-weight: 500; letter-spacing: .1px; line-height: 16px; }
.lact .ic { width: 20px; height: 20px; margin-bottom: 2px; }
.lact-add { width: 57px; }
.lact-grid { width: 57px; color: #ffb74d; }
.lact-charge { width: 67px; margin: 0 12px 0 0; }
.lact-charge .ic { width: 18px; height: 18px; margin: 1px 0 3px; }

.grid { table-layout: fixed; border-collapse: collapse; width: 1187px; margin-left: -1px; background: #fff; }
.c29 { width: 29px; } .c57 { width: 57px; } .c108 { width: 108px; } .c236 { width: 236px; }
.c103 { width: 103px; } .c45 { width: 45px; } .c72 { width: 72px; } .c77 { width: 77px; } .c28 { width: 28px; }
.grid th, .grid td { border: 2px solid #e0e0e0; padding: 0 3px; white-space: nowrap; overflow: hidden; }
.grid th { height: 43px; font-size: 12.5px; font-weight: 500; letter-spacing: .1px; text-align: left; line-height: 21.5px; color: #212121; white-space: normal; }
.grid tbody td { height: 31px; background: #eee; font-size: 12px; letter-spacing: .25px; color: #212121; }
.grid tbody td.desc { letter-spacing: .2px; }
.grid tfoot td { height: 26px; border-width: 1px; border-top: 0; padding-bottom: 2px; font-size: 12.5px; font-weight: 700; color: #757575; }
.grid tfoot .foot-blank { border-left: 0; border-right: 0; }
.grid tfoot td.tot-label { padding-left: 2px; }
.grid th.num { padding-right: 2px; text-align: right; }
.grid tbody .num { text-align: right; padding-right: 1px; }
.grid tfoot .num { text-align: right; padding-right: 2px; }
.grid .ctr { padding: 0 0 0 5px; }
.check { display: block; width: 17px; height: 17px; border: 2px solid #757575; border-radius: 2px; }
.grid .tsel { padding: 0; position: relative; }
.tsel .caret { position: absolute; right: 4px; top: 13px; }
.desc-h { position: relative; }
.grip { position: absolute; right: 2px; bottom: 2px; width: 7px; height: 7px; background: linear-gradient(135deg, transparent 48%, #757575 48%, #757575 58%, transparent 58%, transparent 72%, #757575 72%, #757575 82%, transparent 82%); }
.grid .alloc { padding: 0; overflow: visible; }
.allocate { position: relative; display: block; width: 78px; height: 29px; background: #64b5f6; border-radius: 4px; font-size: 12px; font-weight: 500; color: #0d2a4a; text-align: left; padding: 0 0 2px 9px; box-shadow: 0 1px 2px rgba(0,0,0,.3); }
.badge { position: absolute; right: -5px; top: -1px; width: 16px; height: 16px; border-radius: 50%; background: #64b5f6; border: 1px solid #cfe8fb; font-size: 10px; line-height: 13px; text-align: center; font-weight: 400; }

/* dropdown */
.menu { position: absolute; left: 954px; top: 51px; width: 142px; height: 144px; background: #fff; border-radius: 4px; box-shadow: 0 3px 8px rgba(0,0,0,.3); padding: 6.8px 0; }
.menu-item { height: 32.4px; display: flex; align-items: center; padding-left: 13.5px; font-size: 14px; letter-spacing: .3px; color: #424242; }
.menu-item .ic { width: 23px; height: 23px; color: #757575; margin-right: 28.5px; }

/* right rail */
.rail { position: relative; display: flex; flex-direction: column; align-items: center; padding-top: 9px; }
.rail > .ic { width: 24px; height: 24px; margin-bottom: 19px; }
.rail > .c-blue { margin-bottom: 20px; }
.pct { width: 23px; height: 23px; border: 2px solid #e64a19; border-radius: 50%; font-size: 11px; line-height: 18px; text-align: center; color: #757575; margin-bottom: 13px; flex: none; }
.c-blue { color: #64b5f6; } .c-green { color: #43a047; } .c-purple { color: #8e24aa; } .c-lines { color: #2f8fdb; }
.c-lime { color: #c6d62f; } .c-pink { color: #e91e63; } .c-red { color: #e53935; } .c-lgreen { color: #7cb342; }
.c-cyan { color: #1eb4d4; } .c-orange { color: #fb8c00; }
.knot { position: absolute; left: 8px; top: 486px; width: 42px; height: 40px; background: #fff; border-radius: 20px 0 0 20px; box-shadow: -1px 1px 4px rgba(0,0,0,.25); display: flex; align-items: center; padding-left: 5px; }
.knot svg { width: 34px; height: 34px; }
.rail-toggle { position: absolute; left: 25px; top: 891px; width: 44px; height: 44px; border-radius: 50%; background: #64b5f6; color: #1a4a80; display: flex; align-items: center; padding-left: 3px; }
.rail-toggle .ic { width: 20px; height: 20px; }
```
